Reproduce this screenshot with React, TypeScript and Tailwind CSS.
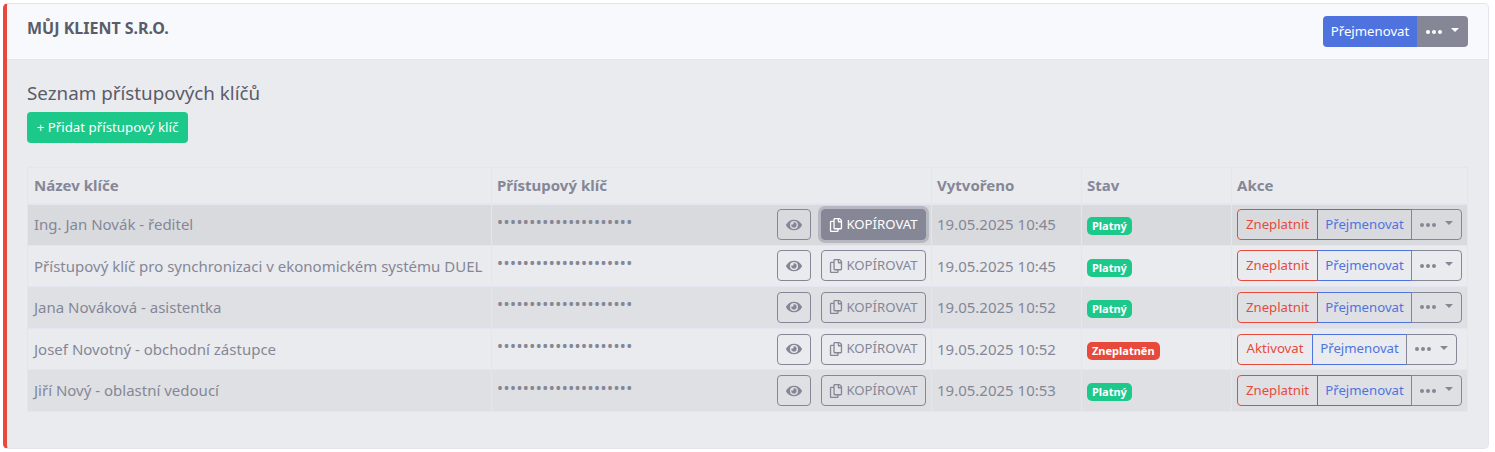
import { FaEye, FaRegCopy } from "react-icons/fa";

type Row = {
  name: string;
  created: string;
  valid: boolean;
};

const rows: Row[] = [
  { name: "Ing. Jan Novák - ředitel", created: "19.05.2025 10:45", valid: true },
  { name: "Přístupový klíč pro synchronizaci v ekonomickém systému DUEL", created: "19.05.2025 10:45", valid: true },
  { name: "Jana Nováková - asistentka", created: "19.05.2025 10:52", valid: true },
  { name: "Josef Novotný - obchodní zástupce", created: "19.05.2025 10:52", valid: false },
  { name: "Jiří Nový - oblastní vedoucí", created: "19.05.2025 10:53", valid: true },
];

function Dots() {
  return (
    <span className="flex gap-[2px]">
      <span className="h-[4px] w-[4px] rounded-full bg-current" />
      <span className="h-[4px] w-[4px] rounded-full bg-current" />
      <span className="h-[4px] w-[4px] rounded-full bg-current" />
    </span>
  );
}

function Caret({ className }: { className: string }) {
  return <span className={`ml-[9px] mb-[3px] h-0 w-0 border-x-[4px] border-t-[4px] border-x-transparent ${className}`} />;
}

export default function App() {
  return (
    <div className="h-[452px] w-[1495px] overflow-hidden bg-white pl-[3px] pt-[3px] font-['Noto_Sans',sans-serif] text-[15px] text-[#858796]">
      <div className="h-[446px] w-[1486px] overflow-hidden rounded-[5px] border border-l-[4px] border-[#e3e6f0] border-l-[#e74a3b] bg-[#eaebef]">
        <div className="flex h-[56px] items-start justify-between border-b border-[#e3e6f0] bg-[#f8f9fc] pl-[20px] pr-[20px] pt-[12px]">
          <h1 className="mt-[2px] text-[16px] leading-[20px] font-bold text-[#5a5c69]">MŮJ KLIENT S.R.O.</h1>
          <div className="flex h-[31px]">
            <button className="h-full w-[94px] rounded-l-[4px] bg-[#4e73df] text-center text-[13.2px] text-white">Přejmenovat</button>
            <button className="flex h-full w-[51px] items-center justify-center rounded-r-[4px] bg-[#858796] text-white">
              <Dots />
              <Caret className="border-t-white" />
            </button>
          </div>
        </div>

        <div className="px-[20px] pt-[19px]">
          <h2 className="text-[18.8px] leading-[28px] text-[#5a5c69]">Seznam přístupových klíčů</h2>
          <button className="mt-[5px] block h-[31px] w-[161px] rounded-[4px] bg-[#1cc88a] text-center text-[13.3px] text-white">+ Přidat přístupový klíč</button>

          <table className="mt-[24px] w-[1440px] table-fixed border-collapse">
            <colgroup>
              <col className="w-[464px]" />
              <col className="w-[440px]" />
              <col className="w-[150px]" />
              <col className="w-[150px]" />
              <col className="w-[236px]" />
            </colgroup>
            <thead>
              <tr className="h-[36px] text-left text-[15px] font-bold">
                <th className="border border-b-2 border-[#e3e6f0] px-[6px] font-bold">Název klíče</th>
                <th className="border border-b-2 border-[#e3e6f0] px-[5px] font-bold">Přístupový klíč</th>
                <th className="border border-b-2 border-[#e3e6f0] px-[5px] font-bold">Vytvořeno</th>
                <th className="border border-b-2 border-[#e3e6f0] px-[5px] font-bold">Stav</th>
                <th className="border border-b-2 border-[#e3e6f0] px-[5px] font-bold">Akce</th>
              </tr>
            </thead>
            <tbody>
              {rows.map((row, index) => (
                <tr key={row.name} className={`h-[41.6px] ${index % 2 === 0 ? (index === 0 ? "bg-[#d9dade]" : "bg-[#dfe0e4]") : ""}`}>
                  <td className="border border-[#e3e6f0] px-[6px] text-[15px] whitespace-nowrap">{row.name}</td>
                  <td className="border border-[#e3e6f0] px-[5px]">
                    <div className="flex items-center">
                      <span className="mb-[6px] w-[280px] text-[16px] leading-[20px] tracking-[0.45px]">•••••••••••••••••••••</span>
                      <button className="flex h-[31px] w-[34px] items-center justify-center rounded-[4px] border border-[#858796]">
                        <FaEye size={16} />
                      </button>
                      <button className={`ml-[10px] flex h-[31px] w-[105px] items-center justify-center gap-[3px] rounded-[4px] border border-[#858796] text-[13.2px] ${index === 0 ? "bg-[#858796] text-white ring-3 ring-[#b6b7c0]" : ""}`}>
                        <FaRegCopy size={14} />
                        KOPÍROVAT
                      </button>
                    </div>
                  </td>
                  <td className="border border-[#e3e6f0] px-[5px] text-[15px]">{row.created}</td>
                  <td className="border border-[#e3e6f0] px-[5px]">
                    <span className={`inline-block h-[18px] rounded-[5px] px-[5px] align-middle text-[11px] leading-[18px] font-bold text-white ${row.valid ? "bg-[#1cc88a]" : "bg-[#e74a3b]"}`}>
                      {row.valid ? "Platný" : "Zneplatněn"}
                    </span>
                  </td>
                  <td className="border border-[#e3e6f0] px-[5px]">
                    <div className="flex h-[31px] text-[13.2px]">
                      <button className={`h-full rounded-l-[4px] border border-[#e74a3b] text-[#e74a3b] ${row.valid ? "w-[81px]" : "w-[76px]"}`}>
                        {row.valid ? "Zneplatnit" : "Aktivovat"}
                      </button>
                      <button className="-ml-px h-full w-[95px] border border-[#4e73df] text-[#4e73df]">Přejmenovat</button>
                      <button className="-ml-px flex h-full w-[51px] items-center justify-center rounded-r-[4px] border border-[#858796] text-[#858796]">
                        <Dots />
                        <Caret className="border-t-[#858796]" />
                      </button>
                    </div>
                  </td>
                </tr>
              ))}
            </tbody>
          </table>
        </div>
      </div>
    </div>
  );
}
